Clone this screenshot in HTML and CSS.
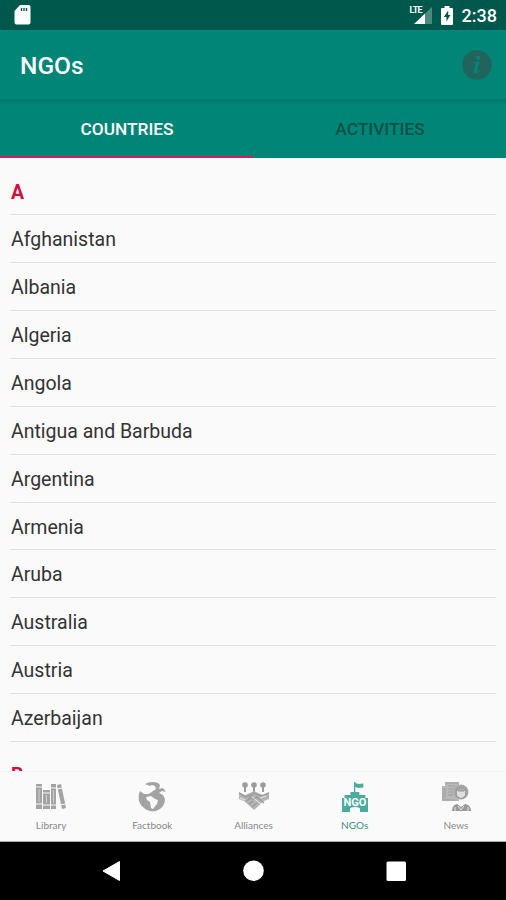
FILE: index.html
```html
<!DOCTYPE html>
<html lang="en">
<head>
	<meta charset="UTF-8">
	<title>NGOs</title>
	<link rel="stylesheet" href="styles.css">
</head>
<body>
	<div id="wrap">
		<div class="status">
			<svg class="sd" width="17" height="20" viewBox="0 0 17 20"><path fill="#fff" d="M6 0h8.500q2 0 2 2v15.500q0 2-2 2h-12q-2 0-2-2V6z"/><path stroke="#00574b" stroke-width="1.400" d="M7.500 3v3M10 3v3M12.500 3v3"/></svg>
			<div class="signal">
				<span>LTE</span>
				<svg width="18" height="17" viewBox="0 0 18 17"><path fill="#4b897f" d="M18 0v17H11V6.600z"/><path fill="#fff" d="M11 6.600V17H0z"/></svg>
			</div>
			<svg class="battery" width="12" height="19" viewBox="0 0 12 19"><path fill="#fff" d="M3.500 0h5v2H11q1 0 1 1v15q0 1-1 1H1q-1 0-1-1V3q0-1 1-1h2.500z"/><path fill="#00574b" d="M7.200 4.500L2.800 11h2.600v4.500L9.400 9H7.200z"/></svg>
			<span class="time">2:38</span>
		</div>
		<div class="bar">
			<h1>NGOs</h1>
			<svg width="30" height="30" viewBox="0 0 30 30"><circle cx="15" cy="15" r="14.700" fill="#20645d"/><circle cx="16.200" cy="7.800" r="2" fill="#0b8374"/><path fill="#0b8374" d="M11.500 12.200l6-.7-2.300 9.200q-.2 1.300 2.300-.6l.5.600q-3 3-5 2.600-1.800-.4-1.200-2.800l1.700-6.500q.1-.9-2-1z"/></svg>
		</div>
		<ul class="tabs">
			<li class="active">COUNTRIES</li>
			<li>ACTIVITIES</li>
		</ul>
		<ul class="list">
			<li class="letter">A</li>
			<li>Afghanistan</li>
			<li>Albania</li>
			<li>Algeria</li>
			<li>Angola</li>
			<li>Antigua and Barbuda</li>
			<li>Argentina</li>
			<li>Armenia</li>
			<li>Aruba</li>
			<li>Australia</li>
			<li>Austria</li>
			<li>Azerbaijan</li>
			<li class="letter next">B</li>
		</ul>
		<ul class="nav">
			<li>
				<svg width="32" height="32" viewBox="0 0 32 32"><path fill="#a3a3a3" d="M1 3h6v25H1zM8 9h7v19H8zM16 3h5v25h-5zM22 4l4-1 5 24-4 1z"/><path stroke="#fafafa" stroke-width="1" d="M1 6h6M1 23h6M8 12h7M8 24h7M16 7h5M16 24h5M22 8l5-1M25 24l5-1"/><path stroke="#d0d0d0" stroke-width="1" d="M4 8v13M11.500 14v8M18.500 9v13"/></svg>
				<span>Library</span>
			</li>
			<li>
				<svg width="32" height="32" viewBox="0 0 32 32"><path fill="#a3a3a3" d="M9 3Q15-.5 22 2l2 2-1 4 4-1 3 4-4-1-3 2 4 2 2 4q0 6-5 10-6 4-13 1-6-3-8-9-1-6 1-10l4 3 5 0 4-3 3-2-1-3-3-1-2 1z"/><path fill="#fafafa" d="M10 16l5-1 4 3 3 1-1 4-4 5-2-1-1-6-3-2z"/></svg>
				<span>Factbook</span>
			</li>
			<li>
				<svg width="32" height="32" viewBox="0 0 32 32"><g fill="#9c9c9c"><circle cx="7" cy="4" r="2.800"/><circle cx="16" cy="4" r="2.800"/><circle cx="25" cy="4" r="2.800"/><path d="M6 6h2v5H6zM15 6h2v5h-2zM24 6h2v5h-2z"/></g><path fill="#b5b5b5" d="M1 11l6 3 5-2 4-2 4 2 5 2 6-3v7l-5 2-10 9-10-9-5-2z"/><path fill="none" stroke="#999" stroke-width="1.200" d="M1 12l7 4 5-3M31 12l-8 3-7-3-5 5 5 1 3-2 7 6M8 20l4-2M11 23l4-3M14 26l5-4"/><path fill="none" stroke="#e7e7e7" d="M2 17l5 2M14 16l9 7M22 17l6-2"/></svg>
				<span>Alliances</span>
			</li>
			<li class="active">
				<svg width="32" height="32" viewBox="0 0 32 32"><path fill="#4bab9d" d="M15 1h1.300v1l3 1 5-.5v4l-5 .5-3-1v5h4v3h6v3H29v14h-8v-3q0-2-5-2t-5 2v3H3V17h2.500v-3h6v-3H15z"/><text x="16" y="25" text-anchor="middle">NGO</text></svg>
				<span>NGOs</span>
			</li>
			<li>
				<svg width="32" height="32" viewBox="0 0 32 32"><path fill="#b8b8b8" d="M2 5h3V1h14v19H2z"/><path fill="none" stroke="#a0a0a0" d="M3 7v12h12M5 7v10M6 2h12M8 5h7M8 8h6M8 11h5M8 14h5"/><circle cx="21" cy="11" r="7.500" fill="#aaa"/><path fill="#dedede" d="M17 10h8v5q-4 5-8 0z"/><path fill="none" stroke="#999" stroke-width="1.200" d="M16 14V9q5-6 10 0v5q-5 7-10 0M18 10h6"/><path fill="#999" d="M12 30q0-6 5-7l4 3 4-3q6 1 6 7z"/><path fill="none" stroke="#e8e8e8" d="M15 26v4M18 25l3 4 3-4M28 26v4"/></svg>
				<span>News</span>
			</li>
		</ul>
		<div class="keys">
			<svg width="506" height="58" viewBox="0 0 506 58"><path fill="#fff" stroke="#fff" stroke-linejoin="round" d="M103 29l16.500-9.500v19z"/><circle cx="253.500" cy="28.700" r="10.300" fill="#fff"/><rect x="386.500" y="19.500" width="19.500" height="19.500" rx="1.500" fill="#fff"/></svg>
		</div>
	</div>
</body>
</html>
```

FILE: styles.css
```css
*{margin: 0;padding: 0;box-sizing: border-box;}
body{
	background: #fafafa;
	font-family: Roboto, sans-serif;
}
ul{list-style: none;}
svg{display: block;}
#wrap{
	width: 506px;
	height: 900px;
	display: flex;
	flex-direction: column;
	overflow: hidden;
}
.status{
	flex: none;
	height: 30px;
	background: #00574b;
	color: #fff;
	display: flex;
	align-items: flex-start;
	padding: 5px 9px 0 14px;
}
.signal{
	position: relative;
	margin: 2px 9px 0 auto;
}
.signal span{
	position: absolute;
	top: -1px;
	left: -4px;
	font-size: 9px;
	line-height: 9px;
	font-weight: 700;
	letter-spacing: -0.8px;
}
.battery{
	margin: 1px 9px 0 0;
}
.time{
	font-size: 18px;
	line-height: 22px;
	font-weight: 500;
}
.bar{
	flex: none;
	height: 69px;
	background: #008577;
	display: flex;
	align-items: center;
	justify-content: space-between;
	padding: 0 14px 0 20px;
}
.bar h1{
	color: #fff;
	font-size: 24.5px;
	font-weight: 500;
	margin-top: 2px;
}
.tabs{
	flex: none;
	height: 59px;
	background: linear-gradient(#00756a, #008577 5px);
	display: flex;
}
.tabs li{
	flex: 1;
	text-align: center;
	font-size: 17.3px;
	line-height: 60px;
	font-weight: 500;
	color: #065148;
	padding-left: 1px;
}
.tabs .active{
	color: #fff;
	border-bottom: 2px solid #d81b60;
}
.list{
	flex: 1;
	min-height: 0;
	overflow: hidden;
	padding: 9.500px 10px 0;
}
.list li{
	height: 47.870px;
	line-height: 49px;
	border-bottom: 1px solid #dfdfdf;
	font-size: 19.5px;
	color: #333;
	padding-left: 1px;
}
.list .letter{
	color: #d0103f;
	font-weight: 700;
}
.list .next{
	padding-top: 9.500px;
}
.nav{
	flex: none;
	height: 71px;
	border-top: 1px solid #f1f1f1;
	border-bottom: 1px solid #aaa;
	display: flex;
}
.nav li{
	flex: 1;
	display: flex;
	flex-direction: column;
	align-items: center;
	padding: 9px 0 0 1px;
	font-family: Lato, sans-serif;
	font-size: 10px;
	line-height: 12px;
	color: #888;
}
.nav span{
	margin-top: 6px;
}
.nav .active{
	color: #3c8e80;
}
.nav text{
	font: 700 11px Roboto, sans-serif;
	fill: #fff;
}
.keys{
	flex: none;
	height: 58px;
	background: #000;
}
```
